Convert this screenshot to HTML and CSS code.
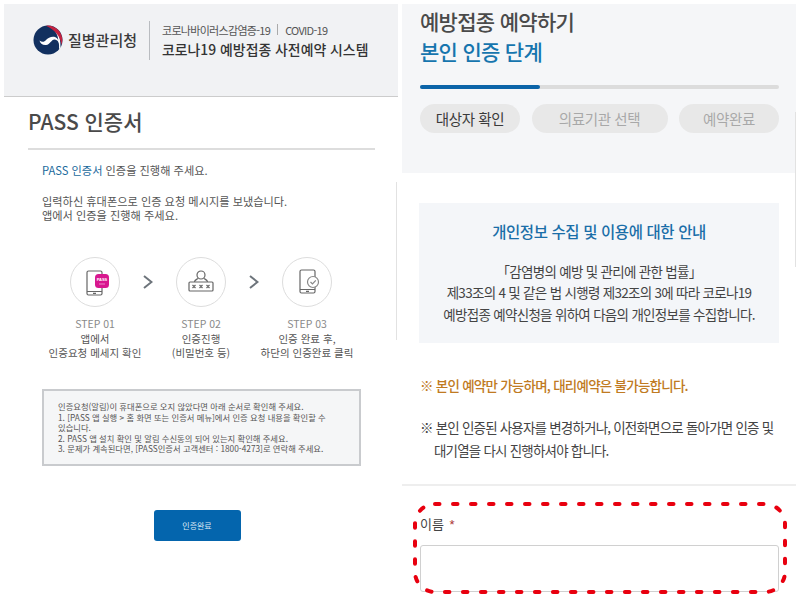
FILE: index.html
```html
<!DOCTYPE html>
<html lang="ko">
<head>
    <meta charset="UTF-8">
    <title>코로나19 예방접종 사전예약 시스템</title>
    <link rel="stylesheet" href="styles.css">
</head>
<body>
    <div class="page">
        <section class="left">
            <header class="top">
                <svg class="emblem" width="30" height="30" viewBox="0 0 30 30">
                    <circle cx="15" cy="15" r="14.5" fill="#12305f"/>
                    <path d="M15 .5C22 2 28 9 27.5 22.5C27 24 26.5 23.5 26 24C26.5 18 25.5 15.5 22 14.5C18.5 13.8 17.5 19.5 13 20C9.5 20.3 7 18 6.5 15.5C9 17.5 11.5 17 13 15C15 12.5 19 11 22 12C24 12.8 25 14 25.3 15.5C25 9 21 3 15 .5Z" fill="#fff"/>
                    <path d="M13 .7A14.5 14.5 0 0 1 28.5 20C27.5 11 21 4 13 .7Z" fill="#c4223f"/>
                </svg>
                <div class="agency">질병관리청</div>
                <div class="divider"></div>
                <div class="system">
                    <div class="system-sub">코로나바이러스감염증-19<span class="sep"></span>COVID-19</div>
                    <div class="system-name">코로나19 예방접종 사전예약 시스템</div>
                </div>
            </header>
            <h1 class="pass-title">PASS 인증서</h1>
            <div class="intro">
                <p><span class="link-text">PASS 인증서</span> 인증을 진행해 주세요.</p>
                <p class="intro-gap">입력하신 휴대폰으로 인증 요청 메시지를 보냈습니다.<br>앱에서 인증을 진행해 주세요.</p>
            </div>
            <div class="steps">
                <div class="step">
                    <div class="step-circle">
                        <svg width="32" height="34" viewBox="0 0 32 34" fill="none" stroke="#666" stroke-width="1.2">
                            <rect x="8" y="6" width="15" height="24" rx="1.5"/>
                            <path d="M8 26.5H23M14 28.3H17"/>
                            <rect x="16" y="9" width="14" height="14" rx="3.5" fill="#d8188f" stroke="none"/>
                            <text x="23" y="15.5" class="badge-text">PASS</text>
                            <path d="M20 19H26" stroke="#f3a6d6" stroke-width=".8"/>
                        </svg>
                    </div>
                    <div class="step-no">STEP 01</div>
                    <div class="step-text">앱에서<br>인증요청 메세지 확인</div>
                </div>
                <svg class="chevron" width="10" height="14" viewBox="0 0 10 14" fill="none" stroke="#6d747b" stroke-width="2"><path d="M1 1L8.5 7L1 13"/></svg>
                <div class="step">
                    <div class="step-circle">
                        <svg width="36" height="34" viewBox="0 0 36 34" fill="none" stroke="#666" stroke-width="1.2">
                            <circle cx="18" cy="10" r="4"/>
                            <path d="M11.5 17C11.5 15 13.5 14.5 15 13.5M24.5 17C24.5 15 22.5 14.5 21 13.5"/>
                            <rect x="6" y="17" width="24" height="9" rx="1"/>
                            <path d="M9.5 20L12.5 23M12.5 20L9.5 23M16.5 20L19.5 23M19.5 20L16.5 23M23.5 20L26.5 23M26.5 20L23.5 23"/>
                        </svg>
                    </div>
                    <div class="step-no">STEP 02</div>
                    <div class="step-text">인증진행<br>(비밀번호 등)</div>
                </div>
                <svg class="chevron" width="10" height="14" viewBox="0 0 10 14" fill="none" stroke="#6d747b" stroke-width="2"><path d="M1 1L8.5 7L1 13"/></svg>
                <div class="step">
                    <div class="step-circle">
                        <svg width="32" height="34" viewBox="0 0 32 34" fill="none" stroke="#666" stroke-width="1.2">
                            <rect x="9" y="5" width="15" height="23" rx="1.5"/>
                            <path d="M9 24.5H24M15 26.3H18"/>
                            <circle cx="22" cy="17" r="5.5" fill="#fff" stroke="#888"/>
                            <path d="M19.5 17L21.5 19L24.8 15.3" stroke="#888"/>
                        </svg>
                    </div>
                    <div class="step-no">STEP 03</div>
                    <div class="step-text">인증 완료 후,<br>하단의 인증완료 클릭</div>
                </div>
            </div>
            <div class="notice">
                인증요청(알림)이 휴대폰으로 오지 않았다면 아래 순서로 확인해 주세요.<br>
                1. [PASS 앱 실행 &gt; 홈 화면 또는 인증서 메뉴]에서 인증 요청 내용을 확인할 수 있습니다.<br>
                2. PASS 앱 설치 확인 및 알림 수신동의 되어 있는지 확인해 주세요.<br>
                3. 문제가 계속된다면, [PASS인증서 고객센터 : 1800-4273]로 연락해 주세요.
            </div>
            <div class="btn-row"><button class="done-btn">인증완료</button></div>
        </section>

        <section class="right">
            <header class="right-top">
                <h2 class="book-title">예방접종 예약하기<br><span class="book-step">본인 인증 단계</span></h2>
                <div class="progress"><div class="progress-fill"></div></div>
                <div class="tabs">
                    <div class="tab tab-on tab-a">대상자 확인</div>
                    <div class="tab tab-b">의료기관 선택</div>
                    <div class="tab tab-c">예약완료</div>
                </div>
            </header>
            <div class="info-box">
                <h3 class="info-title">개인정보 수집 및 이용에 대한 안내</h3>
                <p class="info-text">「감염병의 예방 및 관리에 관한 법률」<br>제33조의 4 및 같은 법 시행령 제32조의 3에 따라 코로나19<br>예방접종 예약신청을 위하여 다음의 개인정보를 수집합니다.</p>
            </div>
            <p class="warn">※ 본인 예약만 가능하며, 대리예약은 불가능합니다.</p>
            <p class="note">※ 본인 인증된 사용자를 변경하거나, 이전화면으로 돌아가면 인증 및 대기열을 다시 진행하셔야 합니다.</p>
            <div class="rule"></div>
            <div class="field">
                <label class="field-label">이름 <span class="req">*</span></label>
                <div class="field-input"></div>
                <svg class="field-mark" width="374" height="92" viewBox="0 0 374 92" fill="none">
                    <rect x="2" y="2" width="370" height="88" rx="20" stroke="#e8000f" stroke-width="4" stroke-linecap="round" stroke-dasharray="4.5 13.5"/>
                </svg>
            </div>
        </section>
        <div class="edge edge-left"></div>
        <div class="edge edge-right"></div>
    </div>
</body>
</html>
```

FILE: styles.css
```css
* {
    box-sizing: border-box;
}
html, body {
    margin: 0;
    height: 600px;
    overflow: hidden;
    background: #fff;
}
body {
    font-family: "Noto Sans CJK KR", "Noto Sans", sans-serif;
    color: #444;
}
h1, h2, h3, p {
    margin: 0;
    font-weight: normal;
}
.page {
    position: relative;
    display: flex;
    width: 800px;
    height: 600px;
}
.edge {
    position: absolute;
    width: 1px;
    background: #e2e2e2;
}
.edge-left {
    left: 396px;
    top: 182px;
    height: 158px;
}
.edge-right {
    left: 795px;
    top: 112px;
    height: 155px;
}

/* left capture */
.left {
    width: 400px;
    padding-top: 4px;
    padding-left: 4px;
}
.top {
    height: 93px;
    margin-right: 2px;
    background: #f1f2f4;
    border-bottom: 1px solid #ccc;
    display: flex;
    align-items: flex-start;
    padding: 17px 0 0 29px;
}
.emblem {
    margin-top: 4px;
}
.agency {
    margin: 8px 0 0 5px;
    font-size: 15px;
    line-height: 22px;
    font-weight: 500;
    color: #3a3a3a;
}
.divider {
    width: 1px;
    height: 39px;
    margin: 0 12px 0 12px;
    background: #b9bcc0;
}
.system-sub {
    font-size: 11px;
    line-height: 16px;
    margin-top: 1px;
    letter-spacing: -0.7px;
    color: #555;
}
.sep {
    display: inline-block;
    width: 1px;
    height: 11px;
    margin: 0 7px;
    background: #aaa;
}
.system-name {
    font-size: 13.9px;
    line-height: 20px;
    margin-top: 1px;
    font-weight: 500;
    color: #333;
}
.pass-title {
    margin: 8px 25px 0 24px;
    padding-bottom: 10px;
    border-bottom: 2px solid #ddd;
    font-size: 21px;
    line-height: 33px;
    font-weight: 500;
    color: #4a4a4a;
}
.intro {
    padding: 13px 0 0 38px;
    font-size: 11.2px;
    line-height: 14.5px;
    color: #555;
}
.intro-gap {
    margin-top: 16px;
}
.link-text {
    color: #1b6a9c;
}
.steps {
    display: flex;
    align-items: flex-start;
    justify-content: center;
    margin-top: 34.5px;
    padding-right: 2px;
}
.step {
    width: 84px;
    display: flex;
    flex-direction: column;
    align-items: center;
    text-align: center;
}
.step-circle {
    width: 50px;
    height: 50px;
    border: 1px solid #ddd;
    border-radius: 50%;
    display: flex;
    align-items: center;
    justify-content: center;
    background: #fff;
}
.badge-text {
    font-family: "Liberation Sans", sans-serif;
    font-size: 4px;
    font-weight: bold;
    fill: #fff;
    stroke: none;
    text-anchor: middle;
}
.chevron {
    margin: 18px 6px 0;
}
.step-no {
    margin-top: 8.5px;
    font-size: 10.5px;
    line-height: 15px;
    color: #8a8a8a;
}
.step-text {
    margin-top: 1px;
    font-size: 10.5px;
    line-height: 14.5px;
    color: #555;
    white-space: nowrap;
}
.notice {
    width: 319px;
    margin: 28.5px 0 0 38px;
    padding: 10px 14px 10px 14px;
    background: #f5f6f7;
    border: 2px solid #c9cbce;
    font-size: 8.3px;
    line-height: 10.6px;
    word-break: keep-all;
    color: #555;
}
.btn-row {
    display: flex;
    justify-content: center;
    margin-top: 44px;
    padding-right: 10px;
}
.done-btn {
    width: 87px;
    height: 31px;
    border: none;
    border-radius: 3px;
    background: #0465ad;
    color: #dfeaf4;
    font-family: inherit;
    font-size: 8px;
}

/* right capture */
.right {
    width: 400px;
    padding-top: 4px;
}
.right-top {
    height: 169px;
    margin: 0 4px 0 2px;
    padding: 2px 17px 0 18px;
    background: #f5f6f8;
}
.book-title {
    font-size: 21px;
    line-height: 30px;
    font-weight: 500;
    letter-spacing: -0.7px;
    color: #4a4a4a;
}
.book-step {
    color: #1675ae;
}
.progress {
    height: 4px;
    margin-top: 19px;
    border-radius: 2px;
    background: #dcdcdc;
}
.progress-fill {
    width: 120px;
    height: 4px;
    border-radius: 2px;
    background: #0b64a8;
}
.tabs {
    display: flex;
    justify-content: space-between;
    margin-top: 15px;
}
.tab {
    height: 29px;
    border-radius: 15px;
    background: #e8e8e8;
    color: #a8a8a8;
    font-size: 14.5px;
    line-height: 29px;
    text-align: center;
    letter-spacing: -0.4px;
}
.tab-on {
    color: #3a3a3a;
}
.tab-a {
    width: 100px;
}
.tab-b {
    width: 136px;
}
.tab-c {
    width: 100px;
}
.info-box {
    margin: 30px 21px 0 19px;
    height: 140px;
    padding-top: 17px;
    background: #f4f6f9;
    text-align: center;
}
.info-title {
    font-size: 15.5px;
    line-height: 22px;
    font-weight: 500;
    letter-spacing: -0.4px;
    color: #1a6ea8;
}
.info-text {
    margin-top: 18.5px;
    font-size: 13.5px;
    line-height: 21.5px;
    letter-spacing: -0.7px;
    color: #444;
}
.warn {
    margin: 31.5px 0 0 20px;
    font-size: 13.5px;
    line-height: 20px;
    font-weight: 500;
    letter-spacing: -0.75px;
    color: #c07a22;
}
.note {
    width: 364px;
    margin: 21.5px 0 0 20px;
    padding-left: 14px;
    text-indent: -14px;
    font-size: 13.5px;
    line-height: 23px;
    letter-spacing: -0.8px;
    color: #444;
}
.rule {
    height: 2px;
    margin: 22px 4px 0 2px;
    background: #eee;
}
.field {
    position: relative;
    margin: 29.5px 21px 0 20px;
}
.field-label {
    display: block;
    font-family: "Liberation Sans", "Noto Sans CJK KR", sans-serif;
    font-size: 13px;
    line-height: 18px;
    color: #444;
}
.req {
    margin-left: 2px;
    color: #a33;
}
.field-input {
    height: 47px;
    margin-top: 11px;
    border: 1px solid #d0d0d0;
    border-radius: 3px;
}
.field-mark {
    position: absolute;
    left: -7px;
    top: -14px;
}
```
